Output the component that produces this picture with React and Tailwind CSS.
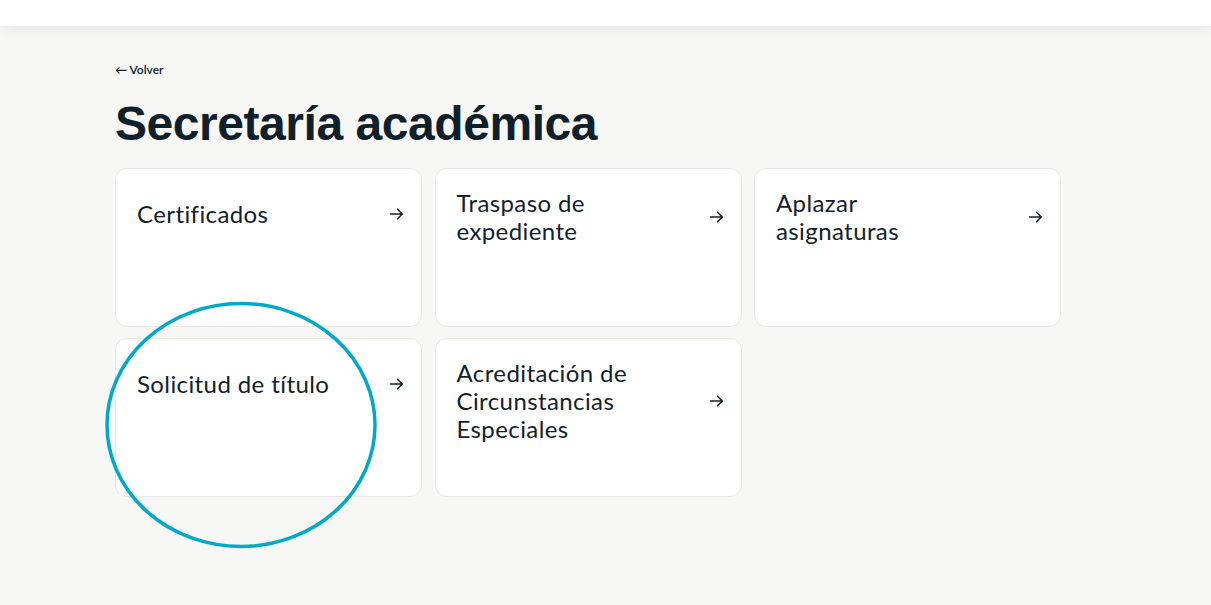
import React from "react";

const items = [
  ["Certificados"],
  ["Traspaso de", "expediente"],
  ["Aplazar", "asignaturas"],
  ["Solicitud de título"],
  ["Acreditación de", "Circunstancias", "Especiales"],
];

function Arrow() {
  return (
    <svg width="15" height="14" viewBox="0 0 15 14" fill="none" stroke="#13212b" strokeWidth="1.5" strokeLinecap="round" strokeLinejoin="round">
      <path d="M1.5 7h12M8.5 2.2L13.3 7 8.5 11.8" />
    </svg>
  );
}

function Card({ lines }) {
  return (
    <a href="#" className="block h-[159px] bg-white border border-[#e9e8e5] rounded-xl pl-[21px] pr-[17px] pt-5">
      <div className="flex items-center justify-between min-h-[50px]">
        <p className="text-[24px] leading-[28px] tracking-[0.4px] text-[#13212b] font-['Lato','Noto_Sans',sans-serif]">
          {lines.map((l, i) => <span key={i} className="block">{l}</span>)}
        </p>
        <Arrow />
      </div>
    </a>
  );
}

export default function App() {
  return (
    <div className="min-h-[605px] bg-[#f7f7f5] relative font-['Liberation_Sans',Arial,sans-serif]">
      <header className="h-[26px] bg-white shadow-[0_2px_14px_rgba(0,0,0,0.08)]" />
      <main className="pl-[115px] pt-[31px]">
        <a href="#" className="text-[12px] font-semibold text-[#13212b] font-['Lato',sans-serif] leading-[14px]">← Volver</a>
        <h1 className="text-[48px] leading-[56px] font-bold text-[#10202a] mt-[15px] mb-[16px] tracking-[-0.45px]">Secretaría académica</h1>
        <div className="grid grid-cols-[307px_307px_307px] gap-x-[12.5px] gap-y-[11px]">
          {items.map((lines, i) => <Card key={i} lines={lines} />)}
        </div>
      </main>
      <svg className="absolute left-[103px] top-[300px] pointer-events-none" width="276" height="250" viewBox="0 0 276 250">
        <ellipse cx="138" cy="125" rx="134" ry="121.5" fill="none" stroke="#00a8c9" strokeWidth="3.5" />
      </svg>
    </div>
  );
}
